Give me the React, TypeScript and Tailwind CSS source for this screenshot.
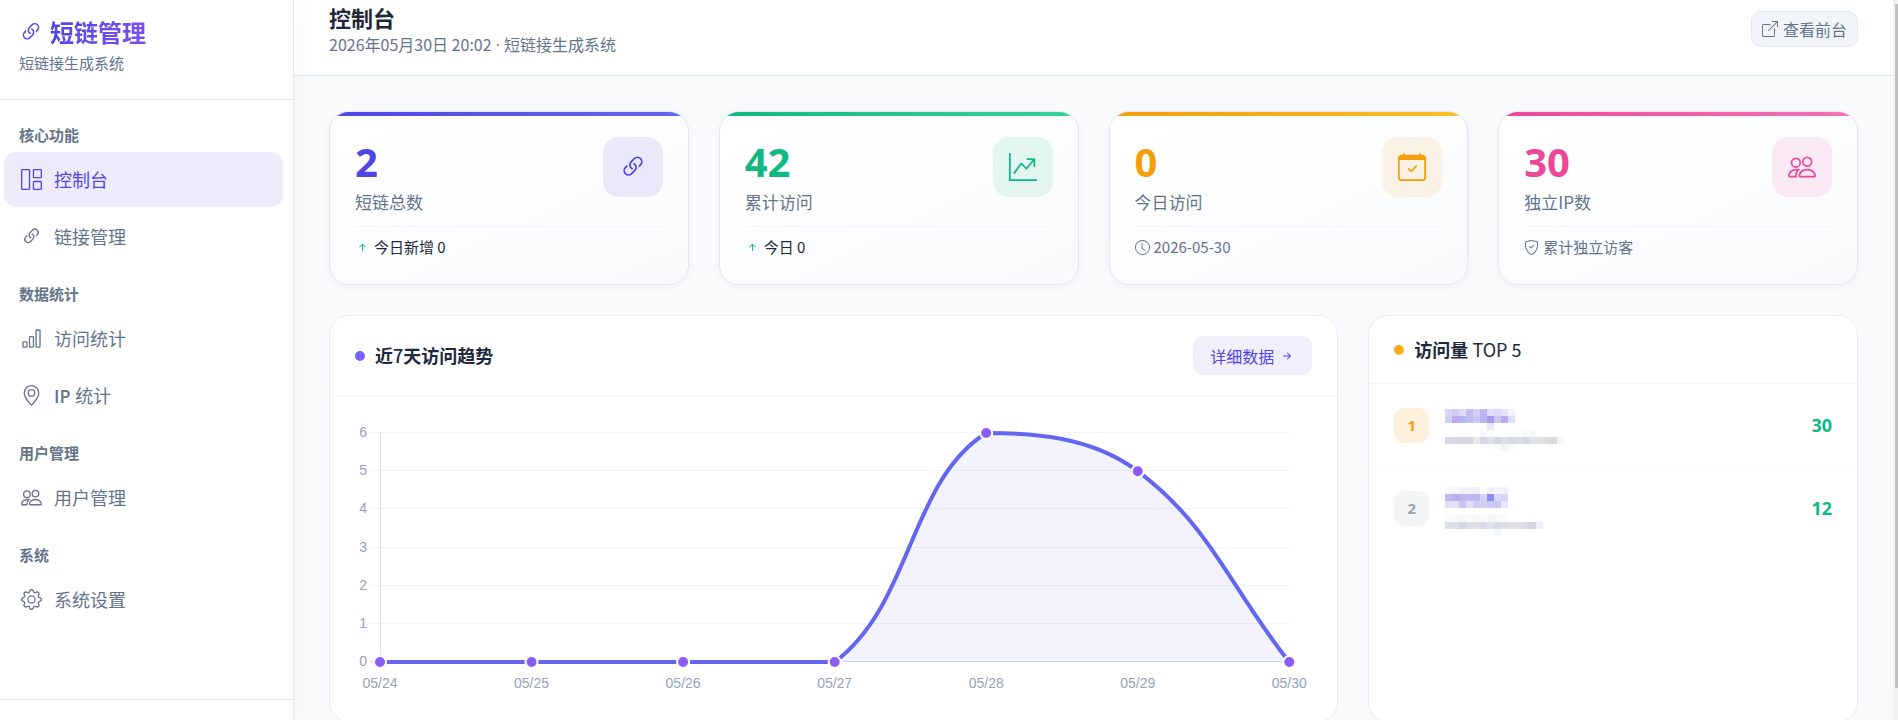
import React from 'react'
import {
    BsArrowRightShort,
    BsArrowUpShort,
    BsBarChart,
    BsBoxArrowUpRight,
    BsCalendarCheck,
    BsClock,
    BsGear,
    BsGeoAlt,
    BsGraphUpArrow,
    BsGrid1X2,
    BsLink45Deg,
    BsPeople,
    BsShieldCheck,
} from 'react-icons/bs'

const menu = [
    {
        title: '核心功能',
        items: [
            { icon: BsGrid1X2, label: '控制台', active: true },
            { icon: BsLink45Deg, label: '链接管理' },
        ],
    },
    {
        title: '数据统计',
        items: [
            { icon: BsBarChart, label: '访问统计' },
            { icon: BsGeoAlt, prefix: 'IP', label: '统计' },
        ],
    },
    { title: '用户管理', items: [{ icon: BsPeople, label: '用户管理' }] },
    { title: '系统', items: [{ icon: BsGear, label: '系统设置' }] },
]

const stats = [
    {
        value: '2', label: '短链总数', icon: BsLink45Deg, note: '今日新增 0', noteIcon: null,
        bar: 'from-[#4f46e5] to-[#6366f1]', text: 'text-[#4f46e5]', tint: 'bg-[#4f46e5]/10',
    },
    {
        value: '42', label: '累计访问', icon: BsGraphUpArrow, note: '今日 0', noteIcon: null,
        bar: 'from-[#10b981] to-[#34d399]', text: 'text-[#10b981]', tint: 'bg-[#10b981]/10',
    },
    {
        value: '0', label: '今日访问', icon: BsCalendarCheck, note: '2026-05-30', noteIcon: BsClock,
        bar: 'from-[#f59e0b] to-[#fbbf24]', text: 'text-[#f59e0b]', tint: 'bg-[#f59e0b]/10',
    },
    {
        value: '30', label: '独立IP数', icon: BsPeople, note: '累计独立访客', noteIcon: BsShieldCheck,
        bar: 'from-[#ec4899] to-[#f472b6]', text: 'text-[#ec4899]', tint: 'bg-[#ec4899]/10',
    },
]

const trend = [
    { day: '05/24', visits: 0 },
    { day: '05/25', visits: 0 },
    { day: '05/26', visits: 0 },
    { day: '05/27', visits: 0 },
    { day: '05/28', visits: 6 },
    { day: '05/29', visits: 5 },
    { day: '05/30', visits: 0 },
]

// masked link names: one colour per mosaic cell, '' is an empty cell
const top = [
    {
        count: 30,
        badge: 'bg-[#fef0da] text-[#f59e0b]',
        pad: 'pt-[10px]',
        mask: [
            ['#dad5f7', '#d0ccf7', '#dfdcfa', '#c2bef4', '#d3cff6', '#bfb5f2', '#dfdefa', '#dbd8f8', '#e8e1fa', '#f2f1fd'],
            ['#d3d0f6', '#baaaee', '#b7b4f2', '#c0bdf4', '#cac6f5', '#bab6f2', '#a19dee', '#cac5f4', '#baacee', '#e1e0fa'],
            ['', '', '', '', '', '', '#e8e7fc'],
            ['', '', '', '', '', '#fafafa', '#fcfcfc', '', '', '', '', '#fafafa', '#f7f7f8'],
            ['#d8d9e0', '#d7dae2', '#d4d7e0', '#d3d6de', '#e8eaee', '#d4d8df', '#dbe2ea', '#d1d6e1', '#dcdfe6', '#d5dbe4', '#dddee3', '#d3d9e3', '#dfe3ea', '#e1e1e6', '#dddfe4', '#d8dade', '#f2f5f9'],
            ['', '', '', '', '', '', '', '#fcfcfd', '#f3f4f8', '#fcfcfd'],
        ],
    },
    {
        count: 12,
        badge: 'bg-[#f3f4f6] text-[#9ca3af]',
        pad: 'pt-[5px]',
        mask: [
            ['#f8f8fe', '#f8f7fe', '#f1f0fd', '#f3f1fd', '#f0effd', '', '#f1f0fd', '#f3f2fd', '#f2f1fd'],
            ['#bfb8f1', '#b3b1f1', '#bfb6f0', '#c2b8f1', '#bdb6f1', '#d5d0f5', '#8f8ded', '#dcd9f8', '#d3d5fa'],
            ['#e1defa', '#e4e1fa', '#c6c6f6', '#e1def9', '#cecbf5', '#d3d0f6', '#cdc9f4', '#c6c5f6', '#e6e5fc'],
            ['', '', '', '', '', '', ''],
            ['#f9fafa', '#f9f9fa', '#f6f7f7', '#f9f9f9', '#f7f8f8', '#fafafa', '#f6f6f7', '#f8f8f8', '#fafafa'],
            ['#dcdfe3', '#dcdfe4', '#d2d7e1', '#dde0e6', '#e0dfe5', '#d7dbe6', '#dfe4ed', '#d7dbe4', '#dddfe5', '#dfe0e5', '#e1e1e4', '#dcdde1', '#d3d9e3', '#edf0f5'],
            ['', '', '', '', '', '', '#fcfcfc', '#f6f7f9'],
        ],
    },
]

function Sidebar() {
    return (
        <aside className="z-10 flex w-[294px] shrink-0 flex-col border-r border-[#e2e8f0] bg-white shadow-[4px_0_20px_rgba(0,0,0,0.03)]">
            <div className="border-b border-[#e2e8f0] px-[19px] pt-[14px] pb-[24px]">
                <div className="flex h-[36px] items-center gap-[7px] text-[24px] font-bold text-[#4f46e5]">
                    <BsLink45Deg size={24} />
                    <h1 className="bg-linear-to-r from-[#4f46e5] to-[#7c4df0] bg-clip-text leading-[36px] text-transparent">短链管理</h1>
                </div>
                <p className="mt-px text-[15px] leading-[24px] text-[#64748b]">短链接生成系统</p>
            </div>
            <nav className="flex flex-1 flex-col gap-[21px] pt-[26px] pr-[10px] pl-[4px]">
                {menu.map((section) => (
                    <div key={section.title}>
                        <h2 className="mb-[8px] pl-[15px] text-[15px] leading-[18px] font-bold text-[#64748b]">{section.title}</h2>
                        <ul className="flex flex-col gap-[2px]">
                            {section.items.map((item) => (
                                <li key={item.label}>
                                    <a
                                        href="#"
                                        className={
                                            item.active
                                                ? 'flex h-[55px] items-center gap-[12px] rounded-xl bg-[#edebfc] px-[17px] text-[18px] text-[#4f46e5]'
                                                : 'flex h-[55px] items-center gap-[12px] rounded-xl px-[17px] text-[18px] text-[#64748b]'
                                        }
                                    >
                                        <item.icon size={21} />
                                        <span>
                                            {item.prefix && <span className="font-['Open_Sans',sans-serif] font-semibold">{item.prefix} </span>}
                                            {item.label}
                                        </span>
                                    </a>
                                </li>
                            ))}
                        </ul>
                    </div>
                ))}
            </nav>
            <div className="h-[21px] border-t border-[#e2e8f0]" />
        </aside>
    )
}

function Header() {
    return (
        <header className="flex items-start justify-between border-b border-[#e2e8f0] bg-white px-[35px] pt-[2px] pb-[18px]">
            <div>
                <h2 className="text-[22px] leading-[30px] font-bold text-[#1e293b]">控制台</h2>
                <p className="h-[25px] text-[16px] leading-[25px] text-[#64748b]">
                    2026年05月30日 20:02<span className="font-['Open_Sans',sans-serif]"> · </span>短链接生成系统
                </p>
            </div>
            <a href="#" className="mt-[9px] flex h-[36px] items-center gap-[5px] rounded-[10px] border border-[#e2e8f0] bg-[#f1f5f9] px-[10px] text-[16px] text-[#64748b]">
                <BsBoxArrowUpRight size={16} />
                查看前台
            </a>
        </header>
    )
}

function StatCard({ stat }: { stat: (typeof stats)[number] }) {
    const NoteIcon = stat.noteIcon
    return (
        <div className="relative overflow-hidden rounded-[20px] border border-[#e2e8f0] bg-linear-to-br from-white to-[#f8fafc] p-[25px] shadow-[0_2px_6px_rgba(0,0,0,0.04)]">
            <div className={`absolute inset-x-0 top-0 h-[4px] bg-linear-to-r ${stat.bar}`} />
            <div className="flex items-start justify-between">
                <div>
                    <div className={`font-['Open_Sans',sans-serif] text-[40px] leading-[50px] font-bold ${stat.text}`}>{stat.value}</div>
                    <div className="text-[17px] leading-[30px] text-[#64748b]">{stat.label}</div>
                </div>
                <div className={`flex size-[60px] items-center justify-center rounded-2xl ${stat.tint} ${stat.text}`}>
                    <stat.icon size={28} />
                </div>
            </div>
            <div className="mt-[9px] flex items-center border-t border-[#f1f5f9] pt-[10px] pb-[2px] text-[15px] leading-[20px]">
                {NoteIcon ? (
                    <span className="flex items-center gap-[4px] text-[#64748b]">
                        <NoteIcon size={15} />
                        {stat.note}
                    </span>
                ) : (
                    <span className="flex items-center gap-[4px] text-[#1e293b]">
                        <BsArrowUpShort size={15} className="text-[#10b981]" />
                        {stat.note}
                    </span>
                )}
            </div>
        </div>
    )
}

const LEFT = 25
const RIGHT = 934
const TOP = 12
const BOTTOM = 241

const points = trend.map((d, i) => ({
    x: LEFT + ((RIGHT - LEFT) * i) / (trend.length - 1),
    y: BOTTOM - ((BOTTOM - TOP) * d.visits) / 6,
}))

// smooth line, control points are kept inside the plot area
function linePath() {
    const tension = 0.4
    const clamp = (y: number) => Math.min(BOTTOM, Math.max(TOP, y))
    const controls = points.map((p, i) => {
        const prev = points[i - 1] ?? p
        const next = points[i + 1] ?? p
        const before = Math.hypot(p.x - prev.x, p.y - prev.y)
        const after = Math.hypot(next.x - p.x, next.y - p.y)
        const a = (tension * before) / (before + after)
        const b = (tension * after) / (before + after)
        const dx = next.x - prev.x
        const dy = next.y - prev.y
        return {
            inX: p.x - a * dx,
            inY: clamp(p.y - a * dy),
            outX: p.x + b * dx,
            outY: clamp(p.y + b * dy),
        }
    })
    return points
        .map((p, i) => {
            if (i === 0) return `M${p.x} ${p.y}`
            const from = controls[i - 1]
            const to = controls[i]
            return `C${from.outX} ${from.outY} ${to.inX} ${to.inY} ${p.x} ${p.y}`
        })
        .join(' ')
}

function TrendChart() {
    const line = linePath()
    return (
        <svg viewBox="0 0 957 275" className="block h-auto w-full overflow-visible" fontFamily="'Liberation Sans', Arial, sans-serif" fontSize={14} fill="#94a3b8">
            {[0, 1, 2, 3, 4, 5, 6].map((n) => {
                const y = Math.round(BOTTOM - ((BOTTOM - TOP) * n) / 6) - 0.5
                return (
                    <g key={n}>
                        <line x1={15} x2={RIGHT} y1={y} y2={y} stroke={n === 0 ? '#dcdfea' : '#f1f5f9'} />
                        <text x={12} y={y + 4.5} textAnchor="end">{n}</text>
                    </g>
                )
            })}
            <line x1={LEFT + 0.5} x2={LEFT + 0.5} y1={TOP - 1} y2={BOTTOM} stroke="#e5e5e5" />
            <path d={`${line} L${RIGHT} ${BOTTOM} L${LEFT} ${BOTTOM} Z`} fill="#6366f1" fillOpacity={0.08} />
            <path d={line} fill="none" stroke="#6366f1" strokeWidth={4} />
            {points.map((p, i) => (
                <g key={trend[i].day}>
                    <circle cx={p.x} cy={p.y} r={6} fill="#8b5cf6" stroke="#fff" strokeWidth={2} />
                    <text x={p.x} y={267} textAnchor="middle">{trend[i].day}</text>
                </g>
            ))}
        </svg>
    )
}

function Mosaic({ cells }: { cells: string[][] }) {
    return (
        <svg width={119} height={cells.length * 7} shapeRendering="crispEdges" aria-hidden="true">
            {cells.map((row, y) =>
                row.map((color, x) => color && <rect key={`${x}-${y}`} x={x * 7} y={y * 7} width={7} height={7} fill={color} />),
            )}
        </svg>
    )
}

export default function App() {
    return (
        <div className="flex h-screen overflow-hidden bg-[#f8fafc] font-['Noto_Sans_CJK_SC',sans-serif]">
            <Sidebar />
            <main className="min-w-0 flex-1 overflow-hidden">
                <Header />
                <div className="flex flex-col gap-[30px] px-[35px] pt-[35px] pb-[30px]">
                    <section className="grid grid-cols-4 gap-[30px]">
                        {stats.map((stat) => (
                            <StatCard key={stat.label} stat={stat} />
                        ))}
                    </section>
                    <section className="grid grid-cols-12 gap-[30px]">
                        <div className="col-span-8 rounded-[20px] border border-[#e8edf4] bg-white">
                            <div className="flex items-center justify-between border-b border-[#f1f5f9] px-[25px] py-[20px]">
                                <h3 className="flex items-center gap-[10px] text-[18px] leading-[27px] font-bold text-[#1e293b]">
                                    <span className="size-[10px] rounded-full bg-linear-to-br from-[#6366f1] to-[#8b5cf6]" />
                                    <span>近<span className="font-medium">7</span>天访问趋势</span>
                                </h3>
                                <a href="#" className="flex h-[39px] items-center gap-[5px] rounded-[10px] bg-[#f1effe] px-[17px] text-[16px] text-[#4f46e5]">
                                    详细数据
                                    <BsArrowRightShort size={16} />
                                </a>
                            </div>
                            <div className="p-[25px]">
                                <TrendChart />
                            </div>
                        </div>
                        <div className="col-span-4 rounded-[20px] border border-[#e8edf4] bg-white">
                            <div className="border-b border-[#f1f5f9] px-[25px] py-[20px]">
                                <h3 className="flex items-center gap-[10px] text-[18px] leading-[27px] font-bold text-[#1e293b]">
                                    <span className="size-[10px] rounded-full bg-linear-to-br from-[#f59e0b] to-[#fbbf24]" />
                                    <span>访问量 <span className="font-normal">TOP 5</span></span>
                                </h3>
                            </div>
                            <ol>
                                {top.map((item, i) => (
                                    <li key={item.count} className="flex h-[83px] items-center border-b border-[#f8fafc] px-[25px] last:border-b-0">
                                        <span className={`mr-[16px] flex size-[35px] items-center justify-center rounded-[10px] font-['Open_Sans',sans-serif] text-[15px] font-bold ${item.badge}`}>
                                            {i + 1}
                                        </span>
                                        <span className={item.pad}>
                                            <Mosaic cells={item.mask} />
                                        </span>
                                        <span className="ml-auto font-['Open_Sans',sans-serif] text-[18px] font-bold text-[#10b981]">{item.count}</span>
                                    </li>
                                ))}
                            </ol>
                        </div>
                    </section>
                </div>
            </main>
            <div className="w-[5px] shrink-0 bg-[#f1f1f1] pt-[4px] pl-[2px]">
                <div className="h-[684px] bg-[#c1c1c1]" />
            </div>
        </div>
    )
}
